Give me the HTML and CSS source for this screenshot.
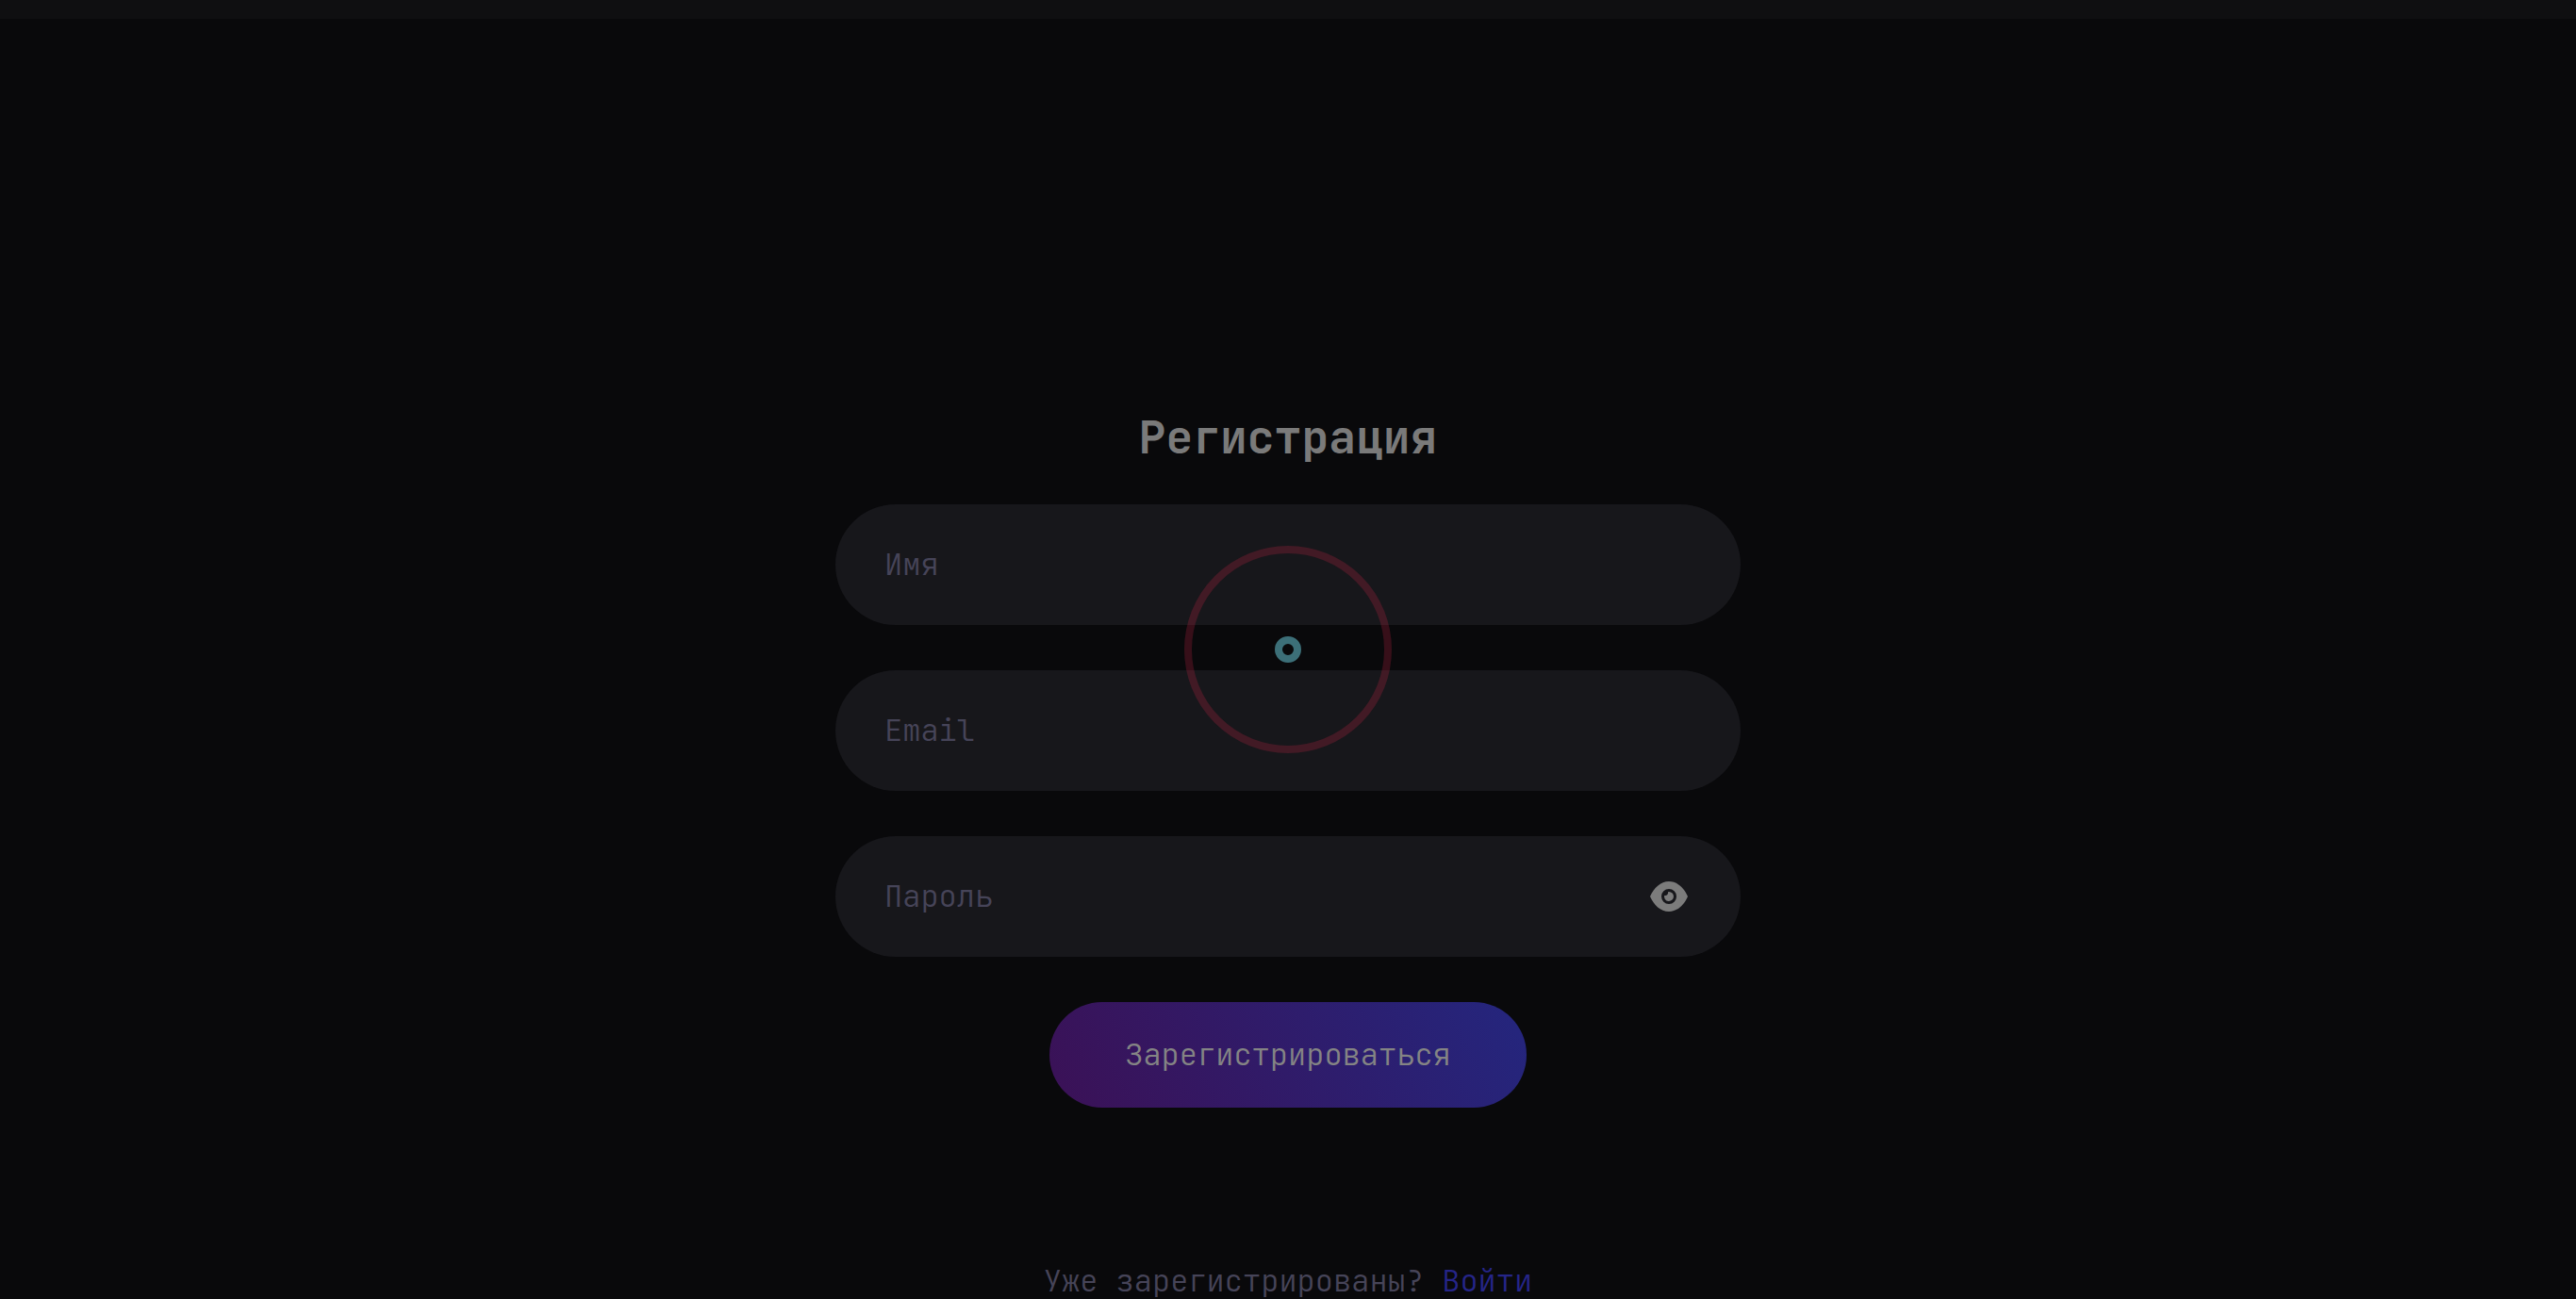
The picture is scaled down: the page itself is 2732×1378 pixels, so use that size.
FILE: index.html
```html
<!DOCTYPE html>
<html lang="ru">
<head>
<meta charset="utf-8">
<meta name="viewport" content="width=device-width, initial-scale=1">
<title>Регистрация</title>
<link rel="stylesheet" href="styles.css">
</head>
<body>
<header class="topbar"></header>
<main class="page">
  <form class="form">
    <h1 class="title">Регистрация</h1>
    <div class="field"><input class="input" type="text" name="name" placeholder="Имя" aria-label="Имя"></div>
    <div class="field"><input class="input" type="email" name="email" placeholder="Email" aria-label="Email"></div>
    <div class="field">
      <input class="input" type="password" name="password" placeholder="Пароль" aria-label="Пароль">
      <button class="reveal" type="button" aria-label="Показать пароль">
        <svg class="eye" viewBox="0 0 48 48" aria-hidden="true">
          <path fill="currentColor" fill-rule="evenodd" d="M4 24C8 15 15 8 24 8s16 7 20 16c-4 9-11 16-20 16S8 33 4 24ZM24 16a8 8 0 1 0 0 16 8 8 0 0 0 0-16Z"/>
          <path fill="currentColor" d="M24 19a5 5 0 1 1-4.900 4c2 .6 4.600-1.400 4-4Z"/>
        </svg>
      </button>
    </div>
    <button class="submit" type="submit">Зарегистрироваться</button>
  </form>
  <p class="note">Уже зарегистрированы? <a class="link" href="#login">Войти</a></p>
</main>
<div class="loader" role="status" aria-label="Загрузка">
  <div class="ring"><div class="dot"></div></div>
</div>
</body>
</html>
```
FILE: styles.css
```css
* {
  box-sizing: border-box;
}

body {
  margin: 0;
  height: 100vh;
  overflow: hidden;
  background: #09090b;
  color: #464458;
  font: 300 32px/42px "JetBrains Mono", "DejaVu Sans Mono", monospace;
}

.topbar {
  height: 20px;
  background: #0f0f11;
}

.page {
  display: flex;
  flex-direction: column;
  align-items: center;
  gap: 163px;
  padding: 412px 24px 0;
}

.form {
  display: flex;
  flex-direction: column;
  align-items: center;
  gap: 48px;
  width: 100%;
  max-width: 960px;
}

.title {
  margin: 0 0 -8px;
  color: #7a7a7a;
  font-size: 48px;
  line-height: 63px;
}

.field {
  position: relative;
  width: 100%;
}

.input {
  display: block;
  width: 100%;
  height: 128px;
  padding: 0 52px 2px;
  border: 0;
  border-radius: 64px;
  outline: 0;
  background: #17171b;
  color: #7c7c7c;
  font: inherit;
}

.input::placeholder {
  color: #464458;
  opacity: 1;
}

.reveal {
  position: absolute;
  top: 40px;
  right: 52px;
  width: 48px;
  height: 48px;
  padding: 0;
  border: 0;
  background: none;
  color: #7c7c7c;
}

.eye {
  display: block;
  width: 100%;
  height: 100%;
}

.submit {
  height: 112px;
  padding: 0 80px;
  border: 0;
  border-radius: 56px;
  background: linear-gradient(62deg, #3b1156, #24267e);
  color: #848484;
  font: inherit;
}

.note {
  margin: 0;
}

.link {
  color: #252588;
  text-decoration: none;
}

.loader {
  position: fixed;
  inset: 0;
  display: flex;
  align-items: center;
  justify-content: center;
  pointer-events: none;
}

.ring {
  display: flex;
  align-items: center;
  justify-content: center;
  width: 220px;
  height: 220px;
  border: 8px solid rgba(196, 34, 68, 0.25);
  border-radius: 50%;
}

.dot {
  width: 28px;
  height: 28px;
  border: 8px solid #3c6f78;
  border-radius: 50%;
}
```
